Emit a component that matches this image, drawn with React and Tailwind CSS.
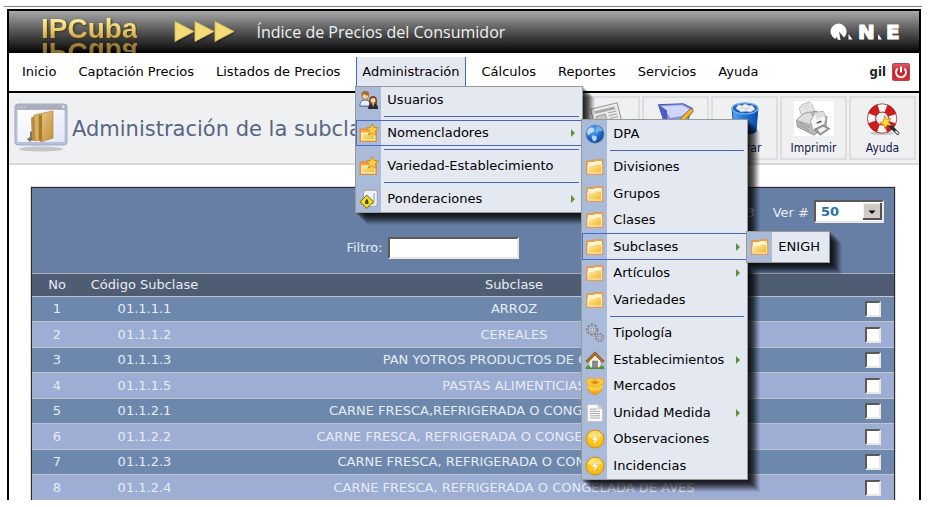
import React from 'react';

const SANS = "font-['DejaVu_Sans',Verdana,sans-serif]";

const MENU_BOX =
  'absolute border border-[#9a9a94] bg-[linear-gradient(to_right,#aabbd9_25px,#e4e8f0_25px)] shadow-[1px_1px_0_rgba(0,0,0,.16),2px_2px_0_rgba(0,0,0,.16),3px_3px_0_rgba(0,0,0,.16),4px_4px_0_rgba(0,0,0,.16),5px_5px_0_rgba(0,0,0,.16),6px_6px_0_rgba(0,0,0,.16),7px_7px_0_rgba(0,0,0,.16),8px_8px_0_rgba(0,0,0,.14),9px_9px_0_rgba(0,0,0,.12),10px_10px_0_rgba(0,0,0,.1),11px_11px_0_rgba(0,0,0,.08),12px_12px_0_rgba(0,0,0,.06)]';

/* ---------- small menu icons (18 x 18) ---------- */

function Icon18({ children }) {
  return (
    <svg viewBox="0 0 18 18" className="size-[20px] shrink-0" aria-hidden="true">
      {children}
    </svg>
  );
}

function FolderIcon() {
  return (
    <Icon18>
      <path d="M1.500 3.500h6l1-1h7.500v13h-14.500z" fill="#f3a93c" stroke="#e8934a" strokeWidth="1" />
      <path d="M2.600 4.600h5.400l1-1H15v4H2.600z" fill="#fff4d2" />
      <path d="M2.600 7.600h5.600l1.200-1.400h5.600v8.300H2.600z" fill="url(#folderFill)" stroke="#fffbe8" strokeWidth=".8" />
    </Icon18>
  );
}

function FolderStarIcon() {
  return (
    <Icon18>
      <path d="M1 5.500h6l1-1h7.500v12H1z" fill="#f3a43c" stroke="#e48a30" />
      <path d="M2.400 9h5.400l1.400-1.400h5v7.600H2.400z" fill="url(#folderFill)" stroke="#fff6d8" />
      <path d="M12 .6l1.700 3.400 3.800.5-2.800 2.600.7 3.800L12 9.100l-3.400 1.800.7-3.800L6.500 4.500l3.800-.5z" fill="#f7cd48" stroke="#c98518" strokeWidth=".8" />
    </Icon18>
  );
}

function UsersIcon() {
  return (
    <Icon18>
      <path d="M.8 14.500c0-3.800 1.700-5.500 4.700-5.500s4.500 1.700 4.500 5.500z" fill="#e9eefb" stroke="#4a5b9b" strokeWidth=".9" />
      <circle cx="5.600" cy="5.500" r="3" fill="#f6cfa0" stroke="#8a5a20" strokeWidth=".6" />
      <path d="M2.300 5.500C1.800 2 3.600.9 5.700.9s4 1.400 3.300 4.300C7.500 4.800 5 4.500 4.300 3.300 4 4.500 3 5 2.300 5.500z" fill="#a86a22" />
      <path d="M8.200 17c-.2-3 1.300-5.400 4.500-5.400s4.600 2.400 4.400 5.400z" fill="#2b2b33" />
      <path d="M9.300 12.500C8.500 7.500 10 5.300 12.700 5.300s4.200 2.400 3.300 7.200z" fill="#7b4715" />
      <circle cx="12.700" cy="9.500" r="2.200" fill="#f8d5aa" />
      <path d="M11.700 12h2l-1 3.500z" fill="#f5c79a" />
    </Icon18>
  );
}

function WeightIcon() {
  return (
    <Icon18>
      <rect x="4" y="1" width="12.500" height="14.500" rx="2" fill="#f2f3f6" stroke="#a3a5b0" />
      <path d="M13.500 3.500v8c0 1.500-1 2-2 2" stroke="#b6b8c3" fill="none" strokeWidth="1.400" />
      <path d="M7 5.500l6 6-6 6-6-6z" fill="#f2dd22" stroke="#6d6412" strokeWidth=".9" />
      <path d="M5.400 13.500c.2-2.600.5-4 1.600-4.400 1.100.4 1.400 1.800 1.600 4.400z" fill="#4b4510" />
    </Icon18>
  );
}

function GlobeIcon() {
  return (
    <Icon18>
      <circle cx="9" cy="9" r="8.300" fill="url(#globeFill)" stroke="#8c9cb8" strokeWidth=".7" />
      <path d="M3 4.500C5 2.500 7 3 8 4.500S7 7.500 5.500 8 3.500 11 2.500 9.500 1.800 6 3 4.500z" fill="#cfe9ff" opacity=".85" />
      <path d="M10.500 2c2 0 4.500 1.500 5.200 4-1 1-2 .5-3 .3s-1 2-2.200 1.500-.8-2-.3-3 .3-2 .3-2.800z" fill="#7fc1f5" opacity=".85" />
      <path d="M6.500 10.500c1.800-.6 4 .2 4.200 1.800s-1.500 3.400-2.700 3.200-2.500-4-1.500-5z" fill="#bfe2fd" opacity=".9" />
    </Icon18>
  );
}

function GearsIcon() {
  return (
    <Icon18>
      <circle cx="6.500" cy="6" r="4.300" fill="#d8dbe4" stroke="#7f8698" strokeWidth="2.400" strokeDasharray="1.900 1.200" />
      <circle cx="6.500" cy="6" r="3.600" fill="#c3c8d6" stroke="#868da0" strokeWidth=".8" />
      <circle cx="6.500" cy="6" r="1.500" fill="#f1f3f8" stroke="#6f7689" strokeWidth=".8" />
      <circle cx="13" cy="13" r="3.200" fill="#d8dbe4" stroke="#7f8698" strokeWidth="2" strokeDasharray="1.500 1" />
      <circle cx="13" cy="13" r="2.600" fill="#c3c8d6" stroke="#868da0" strokeWidth=".7" />
      <circle cx="13" cy="13" r="1" fill="#f1f3f8" stroke="#6f7689" strokeWidth=".7" />
    </Icon18>
  );
}

function HouseIcon() {
  return (
    <Icon18>
      <path d="M3.500 9L9 3.500 14.500 9v7h-11z" fill="#f7efdf" stroke="#8b8377" strokeWidth=".6" />
      <path d="M.8 10L9 1.600 17.200 10l-1.700 1L9 4.600 2.500 11z" fill="#b86f2c" stroke="#7b4312" strokeWidth=".7" />
      <rect x="7" y="10" width="4" height="6.200" fill="#8e8e90" stroke="#55565a" strokeWidth=".6" />
      <path d="M.7 16.600c0-2 1.300-3 2.700-2.500s2.200 1 2.200 2.500zM12.400 16.600c0-1.500.8-2.200 2.200-2.500s2.700.5 2.700 2.500z" fill="#4e9c34" />
      <path d="M.6 16.700h16.800" stroke="#4d8e37" strokeWidth=".9" />
    </Icon18>
  );
}

function BoxIcon() {
  return (
    <Icon18>
      <path d="M3 6h12v7.500L9 17.400 3 13.500z" fill="#f9b021" stroke="#e08b12" strokeWidth=".6" />
      <path d="M.6 4.600L5 1.200l4 2 4-2 4.400 3.400-2 3.400L9 10.200 2.600 8z" fill="#fcc940" stroke="#e89a18" strokeWidth=".6" />
      <path d="M5 5.600L9 4l4 1.600L9 7.600z" fill="#e38a10" />
      <path d="M1.400 10l1.800-2L9 10.400 14.800 8l1.800 2-3.100 2.800L9 13.800l-4.500-1z" fill="#ffd044" stroke="#eda521" strokeWidth=".4" />
      <path d="M6.500 15l2.500.8 2.500-.8" stroke="#e08b12" strokeWidth=".8" fill="none" />
    </Icon18>
  );
}

function PageIcon() {
  return (
    <Icon18>
      <path d="M2 1.200h10l4 4v11.600H2z" fill="#fafafa" stroke="#bfc1c4" />
      <path d="M12 1.200v4h4z" fill="#d3d5d8" stroke="#b5b7ba" strokeWidth=".6" />
      <path d="M4.500 5.500h6M4.500 7.500h9M4.500 9.500h9M4.500 11.500h9M4.500 13.500h9" stroke="#a5a7aa" strokeWidth=".9" />
    </Icon18>
  );
}

function BoltIcon() {
  return (
    <Icon18>
      <circle cx="9" cy="9" r="8.100" fill="url(#boltFill)" stroke="#d98a12" strokeWidth=".9" />
      <path d="M2.500 7C3.500 3 6.500 2 9 2s5.500 1 6.500 5c-4 1.500-9 1.500-13 0z" fill="#fff6b8" opacity=".5" />
      <path d="M10.500 3L5.800 9.800h2.600L7.300 15.200l5-7.400H9.700z" fill="#fffef0" stroke="#e9a51c" strokeWidth=".4" />
    </Icon18>
  );
}

function Defs() {
  return (
    <svg width="0" height="0" className="absolute" aria-hidden="true">
      <defs>
        <linearGradient id="folderFill" x1="0" y1="0" x2="1" y2="1">
          <stop offset="0" stopColor="#fff0b4" />
          <stop offset="1" stopColor="#f0b51e" />
        </linearGradient>
        <radialGradient id="globeFill" cx=".4" cy=".3" r=".8">
          <stop offset="0" stopColor="#66b3f2" />
          <stop offset=".6" stopColor="#1d62bd" />
          <stop offset="1" stopColor="#0c3a86" />
        </radialGradient>
        <radialGradient id="boltFill" cx=".5" cy=".35" r=".7">
          <stop offset="0" stopColor="#ffe03c" />
          <stop offset="1" stopColor="#f5b00c" />
        </radialGradient>
        <linearGradient id="binFill" x1="0" x2="1">
          <stop offset="0" stopColor="#5aa6ee" />
          <stop offset=".35" stopColor="#2f80df" />
          <stop offset="1" stopColor="#0b4ba8" />
        </linearGradient>
        <linearGradient id="windowFill" x1="0" y1="0" x2="1" y2="1">
          <stop offset="0" stopColor="#ffffff" />
          <stop offset="1" stopColor="#dfe6f6" />
        </linearGradient>
        <linearGradient id="goldFill" x1="0" y1="0" x2="1" y2="1">
          <stop offset="0" stopColor="#eccb86" />
          <stop offset="1" stopColor="#c08f3a" />
        </linearGradient>
        <linearGradient id="powerFill" x1="0" y1="0" x2="0" y2="1">
          <stop offset="0" stopColor="#d9606a" />
          <stop offset=".5" stopColor="#c81e28" />
          <stop offset="1" stopColor="#d93238" />
        </linearGradient>
      </defs>
    </svg>
  );
}

/* ---------- toolbar icons ---------- */

function NewsIcon() {
  return (
    <svg viewBox="0 0 40 38" className="h-[38px] w-[40px]" aria-hidden="true">
      <path d="M2 9l29-7 6 24-28 8z" fill="#ececec" stroke="#8b8b8b" />
      <path d="M6 11l22-5 1 3-22 5z" fill="#a8a8a8" />
      <path d="M8 17l10-3 3 9-10 3zM21 13l9-2M22 16l9-2M23 19l9-2" fill="#c4c4c4" stroke="#9a9a9a" />
    </svg>
  );
}

function EditIcon() {
  return (
    <svg viewBox="0 0 40 38" className="h-[38px] w-[40px]" aria-hidden="true">
      <path d="M1 4l27-1 10 5-9 22-18 4z" fill="#8e9df0" stroke="#3a4bb0" />
      <path d="M3 5l24-1 9 5-10 8-12 2z" fill="#cfd6ff" stroke="#5a69cc" strokeWidth=".7" />
      <path d="M1 4l9 6 2 22-3-2z" fill="#4c5cc6" />
      <path d="M36 8l3 3-14 14-5 2 2-5z" fill="#f4b52c" stroke="#9a6410" />
    </svg>
  );
}

function BinIcon() {
  return (
    <svg viewBox="0 0 40 38" className="h-[38px] w-[40px]" aria-hidden="true">
      <path d="M6 8l2 25c3 4 21 4 24 0l2-25z" fill="url(#binFill)" stroke="#0d469c" />
      <ellipse cx="20" cy="8" rx="14" ry="6" fill="#1c5dba" stroke="#6fb2f3" strokeWidth="1.500" />
      <path d="M10 8l3-4 4 1 3-2 4 2 4 0 3 4-5 3-5-1-5 1z" fill="#eceff3" stroke="#aab4c2" strokeWidth=".8" />
      <path d="M14 8l4-1 2 2 5-2" stroke="#b9c3d0" fill="none" />
    </svg>
  );
}

function PrinterIcon() {
  return (
    <svg viewBox="0 0 40 38" className="h-[38px] w-[40px] bg-white" aria-hidden="true">
      <path d="M6 14L4 8l3-4 8-3 3 3 3 8-7 5z" fill="#e9e9e9" stroke="#b4b4b4" />
      <path d="M7 7l8-3M8 10l9-4M9 13l9-4" stroke="#cfcfcf" />
      <path d="M1 21l7-7 14-3 12 6-1 11-13 9L2 28z" fill="#b9b9b9" stroke="#8c8c8c" />
      <path d="M1 21l7-7 8-2 4 6-3 8z" fill="#dedede" stroke="#a4a4a4" />
      <path d="M16 22l5-9 9-2 3 8-2 7-12 6z" fill="#f6f6f6" stroke="#9f9f9f" />
      <path d="M21 13l9-2 2 5-9 4z" fill="#dcdcdc" />
      <path d="M4 23l11 6M4 26l11 6" stroke="#929292" />
      <path d="M20 31l10-5 7 4-10 7z" fill="#9c9c9c" stroke="#7d7d7d" />
      <path d="M24 31l6-3 4 2-7 5z" fill="#f1f1f1" />
      <path d="M23 24l5-2" stroke="#4b4b4b" strokeWidth="1.500" />
    </svg>
  );
}

function HelpIcon() {
  return (
    <svg viewBox="0 0 40 38" className="h-[38px] w-[40px]" aria-hidden="true">
      <ellipse cx="19" cy="35" rx="13" ry="2" fill="#c5c7ca" />
      <circle cx="19" cy="19" r="11.500" fill="none" stroke="#fbf5f4" strokeWidth="9" />
      <circle cx="19" cy="19" r="11.500" fill="none" stroke="#cf1d1d" strokeWidth="9" strokeDasharray="10 8.060" strokeDashoffset="-4" />
      <circle cx="19" cy="19" r="16" fill="none" stroke="#8a1818" strokeWidth=".8" />
      <circle cx="19" cy="19" r="7" fill="#eff0f2" stroke="#8a1818" strokeWidth="1" />
      <path d="M26 25l10 10" stroke="#2c2c34" strokeWidth="3.500" strokeLinecap="round" />
      <path d="M34 33l2 2" stroke="#d9d9dd" strokeWidth="2" strokeLinecap="round" />
      <path d="M22 16l2 4 4.500-1-2.500 4 3 3.500-4.500-.5L22 30l-1-4.500-4.500-1.500 4-2z" fill="#ffdf35" stroke="#d2761a" strokeWidth=".9" />
    </svg>
  );
}

function WindowFolderIcon() {
  return (
    <svg viewBox="0 0 54 50" className="h-[50px] w-[54px] shrink-0" aria-hidden="true">
      <ellipse cx="27" cy="46" rx="22" ry="2.500" fill="#c4c5c8" />
      <rect x="1" y="1" width="52" height="41" rx="3" fill="#b7c0da" stroke="#a2abc6" />
      <rect x="1.500" y="1.500" width="51" height="5" rx="2" fill="#aaaeb9" />
      <path d="M4 4h8" stroke="#d9dbe2" strokeWidth="1" strokeDasharray="2 1" />
      <rect x="48" y="2.500" width="2.500" height="2.500" fill="#e6e8ee" />
      <rect x="3.500" y="7" width="47" height="32" fill="url(#windowFill)" />
      <path d="M13 36l3-2v-5l2-1v9l-2 2z" fill="#77705f" />
      <path d="M17 15l5-3v25l-4 1z" fill="#b98c40" />
      <path d="M20 12l8-2v27l-7 1z" fill="#d8b065" stroke="#a87c34" strokeWidth=".5" />
      <path d="M25 12l3 1 1-3 10-2v27l-12 4-2-2z" fill="url(#goldFill)" stroke="#a87c34" strokeWidth=".6" />
      <path d="M25 12l3 1v25l-3-1z" fill="#a9792c" />
    </svg>
  );
}

/* ---------- header ---------- */

const LOGO_TEXT =
  "block bg-clip-text text-transparent font-['Liberation_Sans',Arial,sans-serif] text-[28px] leading-[32px] font-bold";

function Brand() {
  return (
    <div className="ml-8 h-[42px] overflow-hidden pt-[2px]">
      <span className={`${LOGO_TEXT} bg-[linear-gradient(#fff0a0_15%,#ecd070_50%,#c09a44_85%)] [filter:drop-shadow(1px_1px_1px_#3c3010)]`}>
        IPCuba
      </span>
      <span aria-hidden="true" className={`${LOGO_TEXT} -mt-[9px] -scale-y-100 bg-[linear-gradient(#5d4a1c_15%,#b08e40_85%)]`}>
        IPCuba
      </span>
    </div>
  );
}

function Arrows() {
  return (
    <svg viewBox="0 0 62 26" className="ml-[37px] h-[26px] w-[62px]" aria-hidden="true">
      {[1, 21, 41].map((x) => (
        <g key={x}>
          <path d={`M${x + 2} 4v20l18-10z`} fill="#000" opacity=".35" />
          <path d={`M${x} 2.500v20l19-10z`} fill="#f3dc78" stroke="#d7bd58" strokeWidth=".8" />
        </g>
      ))}
    </svg>
  );
}

function OneLogo() {
  return (
    <svg viewBox="0 0 72 30" className="mr-[17px] h-[30px] w-[72px]" role="img" aria-label="O.N.E">
      <path d="M5.500 22A8 8 0 1 1 14 20.500L9 14.500l1.500 8.500-3-.5-.5-3z" fill="#fff" />
      <path d="M18.500 17l4 5.500h-4zM48 17l4 5.500h-4z" fill="#fff" />
      <g fill="#fff" stroke="#fff" strokeWidth="1.200" fontFamily="'DejaVu Sans', sans-serif" fontWeight="700" fontSize="20">
        <text x="28" y="22">N</text>
        <text x="56" y="22">E</text>
      </g>
    </svg>
  );
}

function Header() {
  return (
    <header className="flex h-[42px] items-center bg-[linear-gradient(#a8a8a8,#5a5a5a_45%,#1c1c1c_85%,#000)]">
      <Brand />
      <Arrows />
      <h2 className="ml-5 font-['Open_Sans',sans-serif] text-[16px] text-[#f0f0f0]">Índice de Precios del Consumidor</h2>
      <div className="ml-auto">
        <OneLogo />
      </div>
    </header>
  );
}

/* ---------- menus ---------- */

const SUBCLASS_MENU = [{ label: 'ENIGH', icon: FolderIcon }];

const NOMENCLATOR_MENU = [
  { label: 'DPA', icon: GlobeIcon, divider: true },
  { label: 'Divisiones', icon: FolderIcon },
  { label: 'Grupos', icon: FolderIcon },
  { label: 'Clases', icon: FolderIcon },
  { label: 'Subclases', icon: FolderIcon, arrow: true, open: true, items: SUBCLASS_MENU, box: 'left-[164px] -top-[2px] w-[84px] py-[2px]' },
  { label: 'Artículos', icon: FolderIcon, arrow: true },
  { label: 'Variedades', icon: FolderIcon, divider: true },
  { label: 'Tipología', icon: GearsIcon },
  { label: 'Establecimientos', icon: HouseIcon, arrow: true },
  { label: 'Mercados', icon: BoxIcon },
  { label: 'Unidad Medida', icon: PageIcon, arrow: true },
  { label: 'Observaciones', icon: BoltIcon },
  { label: 'Incidencias', icon: BoltIcon },
];

const ADMIN_MENU = [
  { label: 'Usuarios', icon: UsersIcon, divider: true },
  {
    label: 'Nomencladores',
    icon: FolderStarIcon,
    arrow: true,
    open: true,
    divider: true,
    items: NOMENCLATOR_MENU,
    box: 'left-[225px] -top-px w-[167px]',
    tall: true,
  },
  { label: 'Variedad-Establecimiento', icon: FolderStarIcon, divider: true },
  { label: 'Ponderaciones', icon: WeightIcon, arrow: true },
];

function MenuList({ items, box, tall }) {
  return (
    <ul className={`${MENU_BOX} ${box}`}>
      {items.map(({ label, icon: Icon, divider, arrow, open, items: children, box: childBox, tall: childTall }, i) => (
        <li key={label} className="relative">
          <button
            type="button"
            className={`flex w-full items-center gap-[8px] border pl-[2px] pr-[6px] text-left text-[13px] whitespace-nowrap text-black ${
              tall && i % 2 === 0 ? 'h-[27px]' : 'h-[26px]'
            } ${open ? 'border-[#4767cc] bg-[linear-gradient(to_right,#aabbd9_24px,#e4e8f0_24px)]' : 'border-transparent'}`}
          >
            <Icon />
            <span className="min-w-0 flex-1">{label}</span>
            {arrow && (
              <svg viewBox="0 0 4 8" className="h-[8px] w-[4px] shrink-0" aria-hidden="true">
                <path d="M0 0l4 4-4 4z" fill="#5b9432" />
              </svg>
            )}
          </button>
          {divider && <div className="my-[3px] mr-[3px] ml-[28px] h-px bg-[#4464c8]" />}
          {children && <MenuList items={children} box={childBox} tall={childTall} />}
        </li>
      ))}
    </ul>
  );
}

const NAV = ['Inicio', 'Captación Precios', 'Listados de Precios', 'Administración', 'Cálculos', 'Reportes', 'Servicios', 'Ayuda'];

function NavBar() {
  return (
    <nav className="flex h-[40px] items-center border-b-2 border-black pl-[7px] pr-[9px]">
      <ul className="flex gap-[10px]">
        {NAV.map((label) => {
          const active = label === 'Administración';
          return (
            <li key={label} className="relative">
              <a
                href="#"
                className={`flex h-[30px] items-center border-x px-[5px] text-[13px] whitespace-nowrap text-black ${
                  active ? 'border-[#4767cc] bg-[#e4e8f0]' : 'border-transparent'
                }`}
              >
                {label}
              </a>
              {active && <MenuList items={ADMIN_MENU} box="-left-px top-[29px] z-20 w-[228px]" />}
            </li>
          );
        })}
      </ul>
      <span className="ml-auto font-['DejaVu_Sans_Condensed','DejaVu_Sans',sans-serif] text-[13px] font-bold text-[#222]">gil</span>
      <button type="button" aria-label="Salir" className="ml-[6px]">
        <svg viewBox="0 0 18 18" className="size-[18px]" aria-hidden="true">
          <rect x=".5" y=".5" width="17" height="17" rx="1.500" fill="url(#powerFill)" stroke="#b8484e" />
          <path d="M5.600 5.600a5 5 0 1 0 6.800 0M9 3.500v6" fill="none" stroke="#fff" strokeWidth="2" />
        </svg>
      </button>
    </nav>
  );
}

/* ---------- title bar ---------- */

const TOOLS = [
  { label: 'Nuevo', icon: NewsIcon },
  { label: 'Editar', icon: EditIcon },
  { label: 'Borrar', icon: BinIcon },
  { label: 'Imprimir', icon: PrinterIcon },
  { label: 'Ayuda', icon: HelpIcon },
];

function TitleBar() {
  return (
    <div className="flex h-[72px] items-center border-b-2 border-[#d6d7d9] bg-[#eff0f2] pl-[5px] pr-[3px]">
      <WindowFolderIcon />
      <h1 className="ml-[4px] min-w-0 flex-1 overflow-hidden pt-[3px] text-[21px] whitespace-nowrap text-[#566683]">
        Administración de la subclase
      </h1>
      <div className="flex gap-[2px]">
        {TOOLS.map(({ label, icon: Icon }) => (
          <button
            key={label}
            type="button"
            className="flex h-[64px] w-[67px] flex-col items-center border-2 border-[#dcdddf] pt-[3px] font-['DejaVu_Sans_Condensed','DejaVu_Sans',sans-serif] text-[12px] text-[#14144a]"
          >
            <Icon />
            <span className="pt-[2px] leading-[20px]">{label}</span>
          </button>
        ))}
      </div>
    </div>
  );
}

/* ---------- data panel ---------- */

const SUNKEN = 'border-2 border-t-[#5c5a58] border-l-[#5c5a58] border-r-[#e9e7e2] border-b-[#e9e7e2] bg-white';

const ROWS = [
  ['01.1.1.1', 'ARROZ'],
  ['01.1.1.2', 'CEREALES'],
  ['01.1.1.3', 'PAN YOTROS PRODUCTOS DE CEREALES'],
  ['01.1.1.5', 'PASTAS ALIMENTICIAS'],
  ['01.1.2.1', 'CARNE FRESCA,REFRIGERADA O CONGELADA DE CERDO'],
  ['01.1.2.2', 'CARNE FRESCA, REFRIGERADA O CONGELADA DE PORCINOS'],
  ['01.1.2.3', 'CARNE FRESCA, REFRIGERADA O CONGELADA DE RES'],
  ['01.1.2.4', 'CARNE FRESCA, REFRIGERADA O CONGELADA DE AVES'],
];

function Panel() {
  return (
    <section className="mt-[22px] mr-[24px] ml-[22px] border border-b-0 border-[#2c2c2c] bg-[#677fa5] text-[#e6ecf5] outline outline-[#c4c4c4]/60">
      <div className="flex h-[35px] items-end justify-end pr-[10px] text-[13px]">
        <span className="mr-[18px] pb-[1px]">1 2 3</span>
        <label htmlFor="page-size" className="mr-[5px] pb-[1px]">
          Ver #
        </label>
        <div className="relative">
          <select
            id="page-size"
            defaultValue="50"
            className={`${SUNKEN} block h-[23px] w-[70px] appearance-none pl-[5px] text-[13px] font-bold text-[#2b6fa9]`}
          >
            <option>10</option>
            <option>50</option>
            <option>100</option>
          </select>
          <svg viewBox="0 0 19 17" className="pointer-events-none absolute top-[3px] right-[2px] h-[17px] w-[19px]" aria-hidden="true">
            <path d="M0 0h19v17H0z" fill="#d0cbc4" />
            <path d="M.5 16.500V.5h18" fill="none" stroke="#f4f2ee" />
            <path d="M0 16h18V0" fill="none" stroke="#55524e" strokeWidth="2" />
            <path d="M5.500 7.500h7L9 11z" fill="#000" />
          </svg>
        </div>
      </div>
      <div className="flex h-[50px] items-center justify-center pr-[61px] text-[13px]">
        <label htmlFor="filter" className="mr-[5px]">
          Filtro:
        </label>
        <input id="filter" type="text" className={`${SUNKEN} h-[22px] w-[131px] px-1 text-black`} />
      </div>
      <table className="w-full table-fixed border-separate border-spacing-0 text-center text-[13px]">
        <thead className="bg-[#4f5d73]">
          <tr className="h-[23px]">
            <th className="w-[50px] border-t border-[#a9afb8] p-0 font-normal">No</th>
            <th className="w-[125px] border-t border-[#a9afb8] p-0 font-normal">Código Subclase</th>
            <th className="border-t border-[#a9afb8] p-0 font-normal">Subclase</th>
            <th className="w-[73px] border-t border-[#a9afb8] p-0" aria-label="Seleccionar" />
          </tr>
        </thead>
        <tbody>
          {ROWS.map(([code, name], i) => (
            <tr key={code} className="h-[25px] bg-[#6d88ac] even:h-[26px] even:bg-[#9dadd4]">
              <td className="border-t border-[#bfc5cf] p-0">{i + 1}</td>
              <td className="border-t border-[#bfc5cf] p-0">{code}</td>
              <td className="border-t border-[#bfc5cf] p-0 whitespace-nowrap">{name}</td>
              <td className="border-t border-[#bfc5cf] p-0 pr-[13px]">
                <input
                  type="checkbox"
                  aria-label={`Seleccionar ${name}`}
                  className={`${SUNKEN} ml-auto block size-[16px] appearance-none`}
                />
              </td>
            </tr>
          ))}
        </tbody>
      </table>
    </section>
  );
}

export default function App() {
  return (
    <div className={`bg-white pt-[6px] pr-[6px] pl-[4px] ${SANS}`}>
      <Defs />
      <div className="border-t border-[#7d8278] pt-[2px] pr-px pl-[3px]">
        <div className="border-2 border-b-0 border-black">
          <Header />
          <NavBar />
          <TitleBar />
          <Panel />
        </div>
      </div>
    </div>
  );
}
